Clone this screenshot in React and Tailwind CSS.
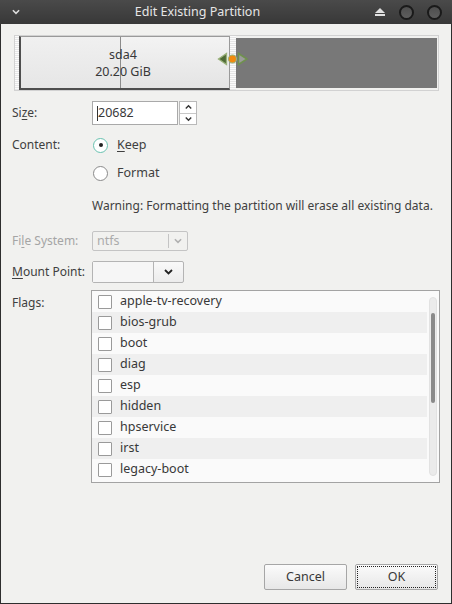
import React from "react";

const flags = [
  "apple-tv-recovery",
  "bios-grub",
  "boot",
  "diag",
  "esp",
  "hidden",
  "hpservice",
  "irst",
  "legacy-boot",
];

const Chevron = ({ dir = "down", className = "" }) => (
  <svg width="9" height="6" viewBox="0 0 9 6" className={className}>
    <path
      d={dir === "down" ? "M1 1 L4.5 4.5 L8 1" : "M1 5 L4.5 1.5 L8 5"}
      fill="none"
      stroke="currentColor"
      strokeWidth="1.8"
    />
  </svg>
);

const Label = ({ children, disabled }) => (
  <div className={`w-[91px] shrink-0 pl-[11px] whitespace-nowrap ${disabled ? "text-[#a5a5a5]" : "text-[#404040]"}`}>
    {children}
  </div>
);

export default function App() {
  return (
    <div
      className="w-[452px] h-[604px] flex flex-col bg-[#f1f1ef] border border-[#2e2e2e] text-[12px] text-[#404040]"
      style={{ fontFamily: '"Noto Sans", "DejaVu Sans", sans-serif' }}
    >
      {/* title bar */}
      <div className="h-[24px] -mx-px -mt-px flex items-center bg-gradient-to-b from-[#4a4a4a] to-[#383838] text-[#e6e6e6] pl-[12px] pr-[10px]">
        <Chevron className="text-[#dcdcdc] w-[8px]" />
        <div className="flex-1 text-center text-[12.5px]">Edit Existing Partition</div>
        <div className="flex items-center">
          <svg width="10" height="8" viewBox="0 0 10 8" className="mr-[14px]">
            <path d="M5 0 L10 5 L0 5 Z" fill="#e0e0e0" />
            <rect x="0" y="6" width="10" height="2" fill="#e0e0e0" />
          </svg>
          <div className="w-[15px] h-[15px] rounded-full bg-gradient-to-b from-[#4e4e4e] to-[#5e5e5e] border-2 border-[#1a1a1a]" />
          <div className="w-[15px] h-[15px] rounded-full bg-gradient-to-b from-[#4e4e4e] to-[#5e5e5e] border-2 border-[#1a1a1a] ml-[13px]" />
        </div>
      </div>

      {/* partition bar */}
      <div className="mt-[11px] ml-[13px] w-[425px] h-[56px] border border-[#d2d2d2] relative flex">
        <div className="w-[4px] h-full bg-[repeating-linear-gradient(0deg,#e6e6e6_0px,#e6e6e6_1px,#fbfbfb_1px,#fbfbfb_2px)]" />
        <div className="w-[211px] h-full flex border-l-2 border-b-2 border-t border-r border-[#4e4e4e] border-t-[#9a9a9a] border-r-[#9a9a9a] bg-gradient-to-b from-[#f3f3f3] to-[#e4e4e4] relative">
          <div className="w-[100px] h-full border-r border-[#8c8c8c] bg-gradient-to-b from-[#f0f0f0] to-[#e6e6e6]" />
          <div className="absolute inset-0 flex flex-col items-center justify-center text-[12.5px] leading-[17px] text-[#383838] pr-[4px]">
            <span>sda4</span>
            <span>20.20 GiB</span>
          </div>
        </div>
        <div className="w-[6px] h-full bg-[repeating-linear-gradient(0deg,#e6e6e6_0px,#e6e6e6_1px,#fbfbfb_1px,#fbfbfb_2px)]" />
        <div className="flex-1 my-[2px] mr-[1px] bg-[#787878]" />
        <svg width="32" height="16" viewBox="0 0 32 16" className="absolute left-[202px] top-[15px]">
          <path d="M1.5 8 L9.5 2.5 L9.5 13.5 Z" fill="#4e6a36" stroke="#98b078" strokeWidth="1.3" />
          <circle cx="15.5" cy="8" r="4" fill="#f28a0e" stroke="#9bb37c" strokeWidth="1.1" />
          <path d="M21.5 2.5 L30 8 L21.5 13.5 Z" fill="#f1f1ef" fillOpacity="0.3" stroke="#6f914e" strokeWidth="1.5" />
        </svg>
      </div>

      {/* size */}
      <div className="mt-[10px] h-[24px] flex items-center">
        <Label>
          Si<span className="underline underline-offset-2">z</span>e:
        </Label>
        <div className="w-[86px] h-[24px] border border-[#a9a9a9] bg-white flex items-center pl-[4px] text-[12.5px] text-[#383838]">
          <span className="w-px h-[15px] bg-[#333]" />
          20682
        </div>
        <div className="ml-[1px] w-[18px] h-[24px] flex flex-col border border-[#b9b9b9] bg-white">
          <div className="flex-1 flex items-center justify-center border-b border-[#c8c8c8] text-[#333]">
            <Chevron dir="up" className="w-[7px]" />
          </div>
          <div className="flex-1 flex items-center justify-center text-[#333]">
            <Chevron className="w-[7px]" />
          </div>
        </div>
      </div>

      {/* content */}
      <div className="mt-[9px] h-[22px] flex items-center">
        <Label>Content:</Label>
        <div className="ml-[1px] w-[15px] h-[15px] rounded-full border border-[#69c2b0] bg-white flex items-center justify-center">
          <div className="w-[4px] h-[4px] rounded-full bg-[#222]" />
        </div>
        <span className="ml-[9px] text-[12.5px]">
          <span className="underline underline-offset-2">K</span>eep
        </span>
      </div>
      <div className="mt-[6px] h-[22px] flex items-center">
        <div className="w-[91px] shrink-0" />
        <div className="ml-[1px] w-[15px] h-[15px] rounded-full border border-[#8a8a8a] bg-white" />
        <span className="ml-[9px] text-[12.5px]">Format</span>
      </div>

      {/* warning */}
      <div className="mt-[12px] h-[20px] flex items-center pl-[91px] text-[12px] whitespace-nowrap">
        Warning: Formatting the partition will erase all existing data.
      </div>

      {/* file system */}
      <div className="mt-[15px] h-[20px] flex items-center">
        <Label disabled>
          Fi<span className="underline underline-offset-2">l</span>e System:
        </Label>
        <div className="w-[96px] h-[20px] border border-[#c4c4c4] rounded-[2px] flex items-center text-[#ababab] text-[12.5px]">
          <span className="flex-1 pl-[4px]">ntfs</span>
          <span className="w-px h-[14px] bg-[#c4c4c4]" />
          <span className="w-[18px] flex justify-center text-[#b0b0b0]">
            <Chevron className="w-[8px]" />
          </span>
        </div>
      </div>

      {/* mount point */}
      <div className="mt-[10px] h-[22px] flex items-center">
        <Label>
          <span className="underline underline-offset-2">M</span>ount Point:
        </Label>
        <div className="w-[92px] h-[22px] border border-[#b4b4b4] rounded-[2px] flex bg-gradient-to-b from-[#f9f9f9] to-[#ececec]">
          <span className="w-[61px] h-full border-r border-[#b4b4b4] bg-[#f6f6f6]" />
          <span className="flex-1 flex items-center justify-center text-[#222]">
            <Chevron className="w-[9px]" />
          </span>
        </div>
      </div>

      {/* flags */}
      <div className="mt-[7px] flex items-start">
        <Label>
          <div className="mt-[4px]">Flags:</div>
        </Label>
        <div className="-ml-[1px] w-[349px] h-[193px] border border-[#a3a3a3] bg-[#fafafa] flex">
          <div className="flex-1 flex flex-col">
            {flags.map((f, i) => (
              <div
                key={f}
                className={`h-[21px] flex items-center pl-[6px] text-[12.5px] text-[#383838] ${i % 2 ? "bg-[#efefef]" : "bg-[#fafafa]"}`}
              >
                <span className="w-[14px] h-[14px] border border-[#9a9a9a] rounded-[1px] bg-white" />
                <span className="ml-[8px]">{f}</span>
              </div>
            ))}
          </div>
          <div className="w-[12px] py-[6px] flex justify-center">
            <div className="w-[8px] h-full rounded-full bg-[#ebebeb] border border-[#e2e2e2] flex justify-center pt-[15px]">
              <div className="w-[4px] h-[90px] rounded-full bg-[#8a8a8a]" />
            </div>
          </div>
        </div>
      </div>

      {/* buttons */}
      <div className="mt-auto mb-[13px] flex justify-end gap-[8px] pr-[13px]">
        <button className="w-[83px] h-[26px] border border-[#a6a6a6] rounded-[2px] bg-gradient-to-b from-[#fbfbfb] to-[#e7e7e7] text-[12.5px] text-[#383838]">
          Cancel
        </button>
        <button className="w-[83px] h-[26px] border border-[#a6a6a6] rounded-[2px] bg-gradient-to-b from-[#fbfbfb] to-[#e7e7e7] text-[12.5px] text-[#383838] p-px">
          <span className="w-full h-full flex items-center justify-center border border-dotted border-[#222]">OK</span>
        </button>
      </div>
    </div>
  );
}
